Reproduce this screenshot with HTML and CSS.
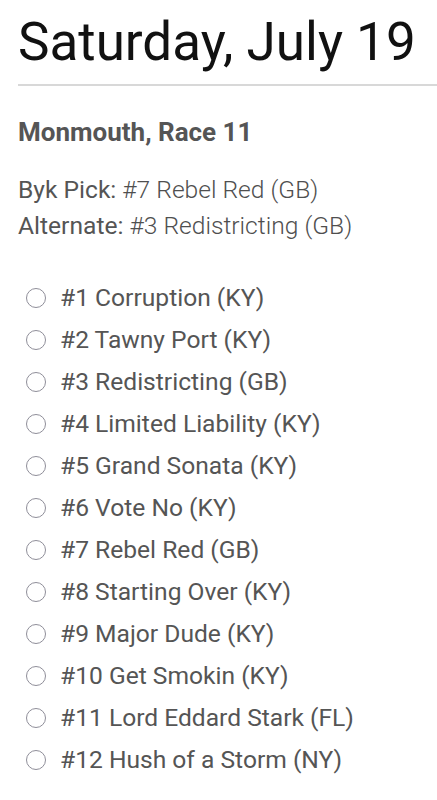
FILE: index.html
```
<!DOCTYPE html>
<html>
<head>
<meta charset="utf-8">
<link rel="stylesheet" href="styles.css">
</head>
<body>
<div class="page">
  <h1 class="title">Saturday, July 19</h1>
  <hr class="rule">
  <h2 class="race">Monmouth, Race 11</h2>
  <div class="picks">
    <p class="pick"><span class="label">Byk Pick:</span> #7 Rebel Red (GB)</p>
    <p class="pick"><span class="label">Alternate:</span> #3 Redistricting (GB)</p>
  </div>
  <ul class="horses">
    <li class="horse"><span class="radio"></span>#1 Corruption (KY)</li>
    <li class="horse"><span class="radio"></span>#2 Tawny Port (KY)</li>
    <li class="horse"><span class="radio"></span>#3 Redistricting (GB)</li>
    <li class="horse"><span class="radio"></span>#4 Limited Liability (KY)</li>
    <li class="horse"><span class="radio"></span>#5 Grand Sonata (KY)</li>
    <li class="horse"><span class="radio"></span>#6 Vote No (KY)</li>
    <li class="horse"><span class="radio"></span>#7 Rebel Red (GB)</li>
    <li class="horse"><span class="radio"></span>#8 Starting Over (KY)</li>
    <li class="horse"><span class="radio"></span>#9 Major Dude (KY)</li>
    <li class="horse"><span class="radio"></span>#10 Get Smokin (KY)</li>
    <li class="horse"><span class="radio"></span>#11 Lord Eddard Stark (FL)</li>
    <li class="horse"><span class="radio"></span>#12 Hush of a Storm (NY)</li>
  </ul>
</div>
</body>
</html>
```
FILE: styles.css
```
html, body { margin: 0; padding: 0; background: #fff; }
body { font-family: Roboto, "Noto Sans", sans-serif; }
.page { padding: 0 0 0 18px; }
.title {
  margin: 0;
  padding-top: 12px;
  font-size: 53px;
  font-weight: 400;
  line-height: 60px;
  color: #111;
}
.rule {
  margin: 12px 0 0 0;
  border: 0;
  border-top: 2px solid #d8d8d8;
  height: 0;
}
.race {
  margin: 31px 0 0 0;
  font-size: 26px;
  font-weight: 700;
  line-height: 30px;
  color: #555;
}
.picks { margin-top: 25px; }
.pick {
  margin: 0;
  font-size: 24.6px;
  font-weight: 300;
  line-height: 36px;
  color: #4f4f4f;
}
.label { font-weight: 400; color: #555; }
.horses {
  list-style: none;
  margin: 33px 0 0 0;
  padding: 0 0 0 8px;
}
.horse {
  display: flex;
  align-items: center;
  gap: 14px;
  font-size: 24.6px;
  line-height: 42px;
  color: #555;
}
.radio {
  width: 18px;
  height: 18px;
  border: 1.5px solid #8f8e99;
  border-radius: 50%;
  flex: none;
}
```
